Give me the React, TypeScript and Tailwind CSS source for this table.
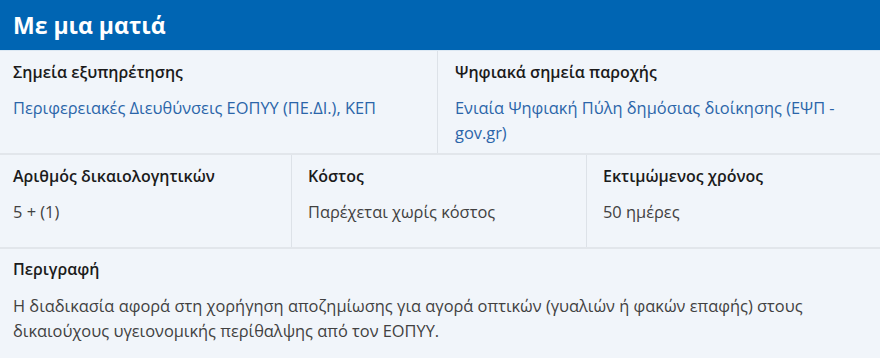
import React from "react";

const font = { fontFamily: '"Open Sans", "Noto Sans", sans-serif' };

function Cell({
  label,
  value,
  blue,
  className = "",
  valueClass = "mt-[11px]",
}: {
  label: string;
  value: React.ReactNode;
  blue?: boolean;
  className?: string;
  valueClass?: string;
}) {
  return (
    <div className={"pr-[16px] " + className}>
      <div className="text-[16px] leading-[24px] font-semibold text-[#1b1b1b]">{label}</div>
      <div className={"text-[16.4px] leading-[25px] " + valueClass + " " + (blue ? "text-[#2b65a9]" : "text-[#414141]")}>{value}</div>
    </div>
  );
}

export default function App() {
  return (
    <div className="w-[880px] h-[358px] bg-[#f1f5fa] overflow-hidden" style={font}>
      <div className="h-[50px] bg-[#0065b3] flex items-center px-[13px]">
        <h2 className="text-[23px] font-bold text-white leading-none">Με μια ματιά</h2>
      </div>
      <div className="h-px bg-[#dce8f3]" />
      <div className="grid grid-cols-[438px_1fr] border-b-2 border-[#e2e6eb] h-[104px]">
        <Cell
          label="Σημεία εξυπηρέτησης"
          value="Περιφερειακές Διευθύνσεις ΕΟΠΥΥ (ΠΕ.ΔΙ.), ΚΕΠ"
          blue
          className="pl-[13px] pt-[9px] border-r border-[#dde2e8]"
        />
        <Cell
          label="Ψηφιακά σημεία παροχής"
          value="Ενιαία Ψηφιακή Πύλη δημόσιας διοίκησης (ΕΨΠ - gov.gr)"
          blue
          className="pl-[17px] pt-[9px]"
        />
      </div>
      <div className="grid grid-cols-[292px_295px_1fr] border-b-2 border-[#e2e6eb] h-[94px]">
        <Cell label="Αριθμός δικαιολογητικών" value="5 + (1)" className="pl-[13px] pt-[9px] border-r border-[#dde2e8]" />
        <Cell label="Κόστος" value="Παρέχεται χωρίς κόστος" className="pl-[16px] pt-[9px] border-r border-[#dde2e8]" />
        <Cell label="Εκτιμώμενος χρόνος" value="50 ημέρες" className="pl-[16px] pt-[9px]" />
      </div>
      <Cell
        label="Περιγραφή"
        value="Η διαδικασία αφορά στη χορήγηση αποζημίωσης για αγορά οπτικών (γυαλιών ή φακών επαφής) στους δικαιούχους υγειονομικής περίθαλψης από τον ΕΟΠΥΥ."
        className="pl-[13px] pt-[8px]"
        valueClass="mt-[12px] leading-[24px]"
      />
    </div>
  );
}
